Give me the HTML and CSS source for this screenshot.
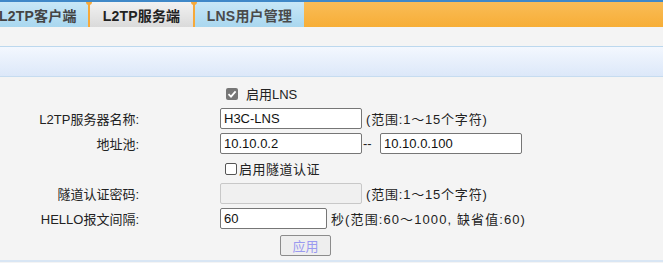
FILE: index.html
```html
<!DOCTYPE html>
<html>
<head>
<meta charset="utf-8">
<link rel="stylesheet" href="styles.css">
</head>
<body>
<div class="topline"></div>
<div class="tabs">
  <div class="tab tab-first">L2TP客户端</div>
  <div class="sep"></div>
  <div class="tab tab-active">L2TP服务端</div>
  <div class="sep"></div>
  <div class="tab tab-third">LNS用户管理</div>
</div>
<div class="gap"></div>
<div class="band"></div>
<div class="form">
  <div class="row">
    <div class="label"></div>
    <div class="ctrl"><span class="cb checked"><svg width="10" height="10" viewBox="0 0 10 10"><path d="M1.5 5.2 L4 7.6 L8.6 2.4" stroke="#fff" stroke-width="1.8" fill="none"/></svg></span><span class="cbtext">启用LNS</span></div>
  </div>
  <div class="row">
    <div class="label">L2TP服务器名称:</div>
    <div class="ctrl"><input class="inp" type="text" value="H3C-LNS"><span class="hint">(范围:1～15个字符)</span></div>
  </div>
  <div class="row">
    <div class="label">地址池:</div>
    <div class="ctrl"><input class="inp" type="text" value="10.10.0.2"><span class="dash">--</span><input class="inp" type="text" value="10.10.0.100"></div>
  </div>
  <div class="row">
    <div class="label"></div>
    <div class="ctrl"><span class="cb empty"></span><span class="cbtext2">启用隧道认证</span></div>
  </div>
  <div class="row">
    <div class="label">隧道认证密码:</div>
    <div class="ctrl"><input class="inp dis" type="text" disabled><span class="hint">(范围:1～15个字符)</span></div>
  </div>
  <div class="row">
    <div class="label">HELLO报文间隔:</div>
    <div class="ctrl"><input class="inp short" type="text" value="60"><span class="hint2">秒(范围:60～1000, 缺省值:60)</span></div>
  </div>
  <div class="btnrow">
    <button class="btn" disabled>应用</button>
  </div>
</div>
<div class="bottomline"></div>
</body>
</html>
```
FILE: styles.css
```css
html, body {
  margin: 0;
  padding: 0;
  background: #f4f4f4;
  font-family: "Liberation Sans", "Noto Sans CJK SC", sans-serif;
  font-size: 13px;
  color: #222;
  overflow: hidden;
}
.topline {
  height: 2px;
  background: #3f88c8;
}
.tabs {
  display: flex;
  height: 25px;
  background: linear-gradient(to bottom, #f9bc57, #f7ae37);
}
.tab {
  display: flex;
  align-items: center;
  font-weight: bold;
  font-size: 14px;
  letter-spacing: 0.2px;
  color: #333;
  background: linear-gradient(to bottom, #c8e7f7, #a9d7ef);
  white-space: nowrap;
}
.tab-first {
  width: 88px;
  padding-left: 0;
  text-indent: -1px;
  color: #444;
}
.tab-active {
  width: 103px;
  justify-content: center;
  color: #222;
  background: linear-gradient(to bottom, #f2f2f2, #dadada);
}
.tab-third {
  width: 109px;
  justify-content: center;
  color: #4a4a4a;
}
.sep {
  position: relative;
  width: 2px;
  background: #f6a93a;
}
.sep::before {
  content: "";
  position: absolute;
  top: 0;
  left: -2px;
  width: 6px;
  height: 3px;
  background: #f6a93a;
  border-radius: 0 0 3px 3px;
}
.gap {
  height: 19px;
  background: #f4f4f4;
}
.band {
  height: 29px;
  border-top: 1px solid #bcd8ee;
  border-bottom: 1px solid #c6dcf0;
  background: linear-gradient(to bottom, #f3f7fe, #dce8f9);
}
.form {
  padding-top: 4px;
}
.row {
  display: grid;
  grid-template-columns: 139px 1fr;
  column-gap: 81px;
  height: 25px;
  align-items: center;
}
.label {
  text-align: right;
  color: #222;
}
.ctrl {
  display: flex;
  align-items: center;
}
.cb {
  display: inline-block;
  box-sizing: border-box;
  width: 12px;
  height: 12px;
  border-radius: 2px;
}
.checked {
  margin-left: 6px;
  background: #767676;
  display: flex;
  align-items: center;
  justify-content: center;
}
.empty {
  margin-left: 5px;
  border: 1px solid #555;
  background: #fff;
  width: 12px;
  height: 12px;
}
.cbtext {
  margin-left: 8px;
}
.cbtext2 {
  margin-left: 2px;
  letter-spacing: 0.5px;
}
.inp {
  box-sizing: border-box;
  width: 142px;
  height: 21px;
  margin: 0;
  padding: 1px 3px;
  border: 1px solid #767676;
  border-radius: 2px;
  background: #fff;
  font-family: "Liberation Sans", "Noto Sans CJK SC", sans-serif;
  font-size: 13px;
  color: #111;
}
.inp.dis {
  border-color: #c8c8c8;
  background: #f0f0f0;
}
.inp.short {
  width: 107px;
}
.hint {
  margin-left: 4px;
  letter-spacing: 0.8px;
}
.hint2 {
  margin-left: 4px;
  letter-spacing: 1.1px;
}
.dash {
  width: 17px;
  padding-left: 1px;
}
.btnrow {
  height: 27px;
  display: flex;
  align-items: center;
  padding-left: 280px;
  padding-top: 1px;
}
.btn {
  box-sizing: border-box;
  width: 51px;
  height: 21px;
  border: 1px solid #8c8c8c;
  border-radius: 2px;
  background: #eeeeee;
  color: #9a9af0;
  font-family: "Liberation Sans", "Noto Sans CJK SC", sans-serif;
  font-size: 13px;
  padding: 0;
}
.bottomline {
  margin-top: 1px;
  height: 2px;
  background: #d9e6f4;
}
```
